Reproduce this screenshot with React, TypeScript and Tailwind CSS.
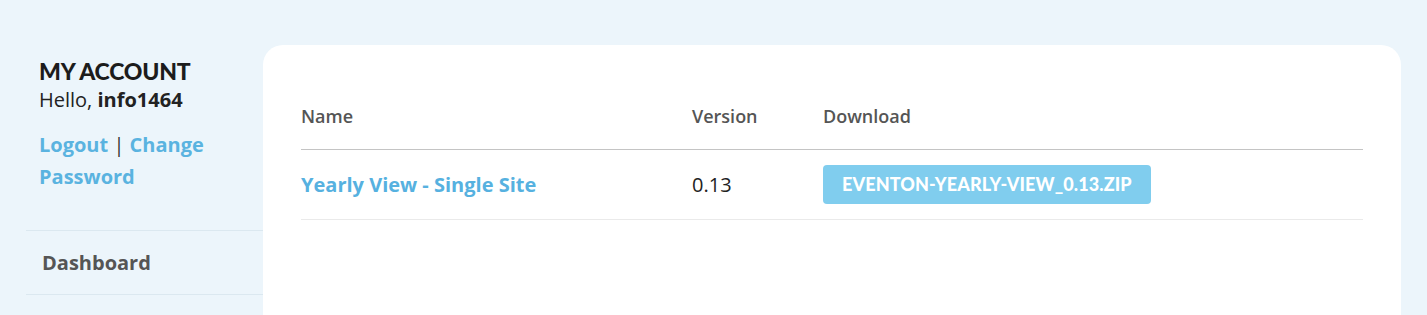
import React from "react";

const ROWS = [
  { name: "Yearly View - Single Site", version: "0.13", file: "EVENTON-YEARLY-VIEW_0.13.ZIP" },
];

export default function App() {
  return (
    <div className="w-full min-h-[315px] bg-[#ecf5fb] font-['Open_Sans',sans-serif] flex pl-[26px] pr-[26px] pt-[45px]">
      {/* Sidebar */}
      <aside className="w-[237px] shrink-0 flex flex-col">
        <div className="pl-[13px] pt-[12px]">
          <h2 className="font-['Lato',sans-serif] font-black text-[23px] leading-[28px] tracking-[-0.2px] text-[#1c1c1c]">
            MY ACCOUNT
          </h2>
          <p className="text-[20px] leading-[30px] text-[#222]">
            Hello, <b className="font-bold">info1464</b>
          </p>
          <p className="mt-[14px] text-[20px] leading-[32px] font-bold text-[#5ab3e0]">
            <a href="#">Logout</a> <span className="font-normal text-[#333]">|</span>{" "}
            <a href="#">Change Password</a>
          </p>
        </div>
        <nav className="mt-[37px] border-t border-b border-[#dbe8f0]">
          <a href="#" className="block pl-[16px] h-[63px] leading-[63px] text-[20px] font-bold text-[#555]">
            Dashboard
          </a>
        </nav>
      </aside>

      {/* Main card */}
      <main className="flex-1 bg-white rounded-tl-[20px] rounded-tr-[20px] px-[38px] pt-[59px]">
        <table className="w-full border-collapse">
          <thead>
            <tr className="border-b border-[#c4c4c4] text-left">
              <th className="w-[391px] pb-[21px] text-[18px] leading-[24px] font-semibold text-[#555]">Name</th>
              <th className="w-[131px] pb-[21px] text-[18px] leading-[24px] font-semibold text-[#555]">Version</th>
              <th className="pb-[21px] text-[18px] leading-[24px] font-semibold text-[#555]">Download</th>
            </tr>
          </thead>
          <tbody>
            {ROWS.map((r) => (
              <tr key={r.file} className="border-b border-[#eaeaea]">
                <td className="py-[15px] text-[20px] font-bold text-[#56b1e0]">
                  <a href="#">{r.name}</a>
                </td>
                <td className="py-[15px] text-[20px] text-[#222]">{r.version}</td>
                <td className="py-[15px]">
                  <a
                    href="#"
                    className="inline-flex items-center h-[39px] px-[19px] rounded-[4px] bg-[#80cdee] text-white font-['Lato',sans-serif] font-black text-[18px] tracking-[0.12px]"
                  >
                    {r.file}
                  </a>
                </td>
              </tr>
            ))}
          </tbody>
        </table>
      </main>
    </div>
  );
}
